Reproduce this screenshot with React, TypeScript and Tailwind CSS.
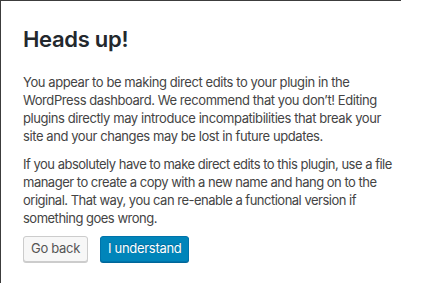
export default function App() {
  return (
    <div className="w-[421px] h-[303px] bg-white font-['Inter','Noto_Sans',sans-serif]">
      <div className="w-[401px] h-[283px] border-t border-l border-[#3c3c3c] bg-white pl-[22px] pr-[4px] pt-[24px]">
        <h1 className="text-[22px] leading-[28px] font-semibold tracking-[-0.3px] text-[#23282d]">Heads up!</h1>
        <p className="mt-[20px] text-[13px] leading-[18px] tracking-[-0.42px] text-[#444]">
          You appear to be making direct edits to your plugin in the WordPress dashboard. We recommend
          that you don’t! Editing plugins directly may introduce incompatibilities that break your site
          and your changes may be lost in future updates.
        </p>
        <p className="mt-[10px] text-[13px] leading-[18px] tracking-[-0.5px] text-[#444]">
          If you absolutely have to make direct edits to this plugin, use a file manager to create a
          copy with a new name and hang on to the original. That way, you can re-enable a functional
          version if something goes wrong.
        </p>
        <div className="mt-[9px] flex gap-[12px]">
          <button className="h-[26px] px-[7px] rounded-[3px] border border-[#ccc] bg-[#f7f7f7] text-[13px] tracking-[-0.3px] text-[#555] shadow-[0_1px_0_#ccc]">
            Go back
          </button>
          <button className="h-[26px] px-[7px] rounded-[3px] border border-[#0073aa] bg-[#0085ba] text-[13px] tracking-[-0.3px] text-white [text-shadow:0_-1px_1px_#006799] shadow-[0_1px_0_#006799]">
            I understand
          </button>
        </div>
      </div>
    </div>
  );
}
